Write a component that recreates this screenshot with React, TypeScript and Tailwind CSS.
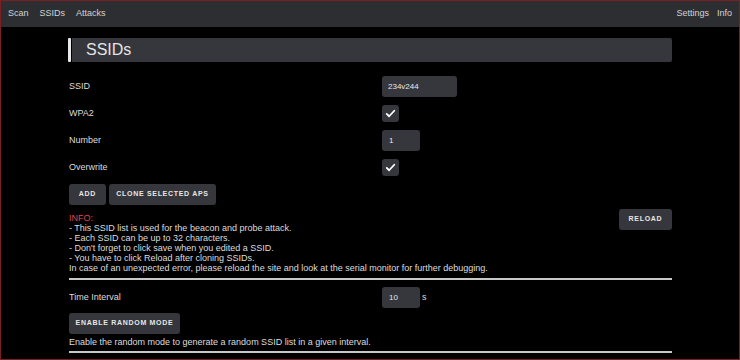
import React from 'react';

const font = { fontFamily: '"Liberation Sans", Arial, sans-serif' };

const Check: React.FC = () => (
  <div className="w-[17px] h-[17px] rounded-[3px] bg-[#36373c] flex items-center justify-center">
    <svg viewBox="0 0 16 16" className="w-[11px] h-[11px]">
      <path d="M2.5 8.5 L6 12 L13.5 4" fill="none" stroke="#ffffff" strokeWidth="2.6" strokeLinecap="round" strokeLinejoin="round" />
    </svg>
  </div>
);

const Btn: React.FC<{ children: React.ReactNode; className?: string }> = ({ children, className = '' }) => (
  <button
    className={`h-[21px] rounded-[3px] bg-[#36373c] text-[#e6e6e6] text-[7px] font-bold tracking-[0.7px] uppercase flex items-center justify-center ${className}`}
  >
    {children}
  </button>
);

const Row: React.FC<{ label: string; children: React.ReactNode }> = ({ label, children }) => (
  <div className="flex items-center">
    <div className="w-[314px] pl-[1px] text-[9px] text-[#dddddd]">{label}</div>
    {children}
  </div>
);

export default function App() {
  return (
    <div className="w-[740px] h-[360px] bg-black border border-[#7a1f22] overflow-hidden text-[#dddddd]" style={font}>
      {/* Nav */}
      <div className="h-[26px] bg-[#2d2e32] flex items-center justify-between text-[9px] text-[#d4d4d4]">
        <div className="flex items-center gap-[11px] pl-[7px]">
          <span>Scan</span>
          <span>SSIDs</span>
          <span>Attacks</span>
        </div>
        <div className="flex items-center gap-[8px] pr-[7px]">
          <span>Settings</span>
          <span>Info</span>
        </div>
      </div>

      <div className="w-[604px] mx-auto">
        {/* Title */}
        <div className="mt-[11px] h-[24px] flex">
          <div className="w-[3px] rounded-[1px] bg-[#e8e8e8]" />
          <div className="ml-[1px] flex-1 bg-[#36373c] rounded-r-[2px] flex items-center pl-[14px] text-[16px] text-[#e4e4e4]">
            SSIDs
          </div>
        </div>

        {/* Form */}
        <div className="mt-[14px] flex flex-col gap-[8px]">
          <Row label="SSID">
            <div className="w-[75px] h-[21px] rounded-[3px] bg-[#36373c] flex items-center pl-[6px] text-[8px] text-[#e8e8e8]">
              234v244
            </div>
          </Row>
          <Row label="WPA2">
            <Check />
          </Row>
          <Row label="Number">
            <div className="w-[38px] h-[21px] rounded-[3px] bg-[#36373c] flex items-center pl-[7px] text-[8px] text-[#e8e8e8]">
              1
            </div>
          </Row>
          <Row label="Overwrite">
            <Check />
          </Row>
          <div className="flex gap-[3px] pl-[1px]">
            <Btn className="w-[37px]">Add</Btn>
            <Btn className="w-[107px]">Clone selected APs</Btn>
          </div>
        </div>

        {/* Info */}
        <div className="flex justify-between items-start pl-[1px]">
          <div className="mt-[8px] text-[9px] leading-[10px] text-[#dddddd]">
            <div className="text-[#e0424f]">INFO:</div>
            <div>- This SSID list is used for the beacon and probe attack.</div>
            <div>- Each SSID can be up to 32 characters.</div>
            <div>- Don't forget to click save when you edited a SSID.</div>
            <div>- You have to click Reload after cloning SSIDs.</div>
            <div>In case of an unexpected error, please reload the site and look at the serial monitor for further debugging.</div>
          </div>
          <Btn className="mt-[4px] w-[53px]">Reload</Btn>
        </div>

        <div className="mt-[5px] ml-[1px] h-[2px] bg-[#c8c8c8]" />

        {/* Random mode */}
        <div className="mt-[7px]">
          <Row label="Time Interval">
            <div className="w-[38px] h-[21px] rounded-[3px] bg-[#36373c] flex items-center pl-[7px] text-[8px] text-[#e8e8e8]">
              10
            </div>
            <span className="ml-[2px] text-[9px]">s</span>
          </Row>
        </div>
        <div className="mt-[5px] pl-[1px]">
          <Btn className="w-[111px]">Enable random mode</Btn>
        </div>
        <div className="mt-[3px] pl-[1px] text-[9px] leading-[10px]">
          Enable the random mode to generate a random SSID list in a given interval.
        </div>
        <div className="mt-[4px] ml-[1px] h-[2px] bg-[#c8c8c8]" />
      </div>
    </div>
  );
}
